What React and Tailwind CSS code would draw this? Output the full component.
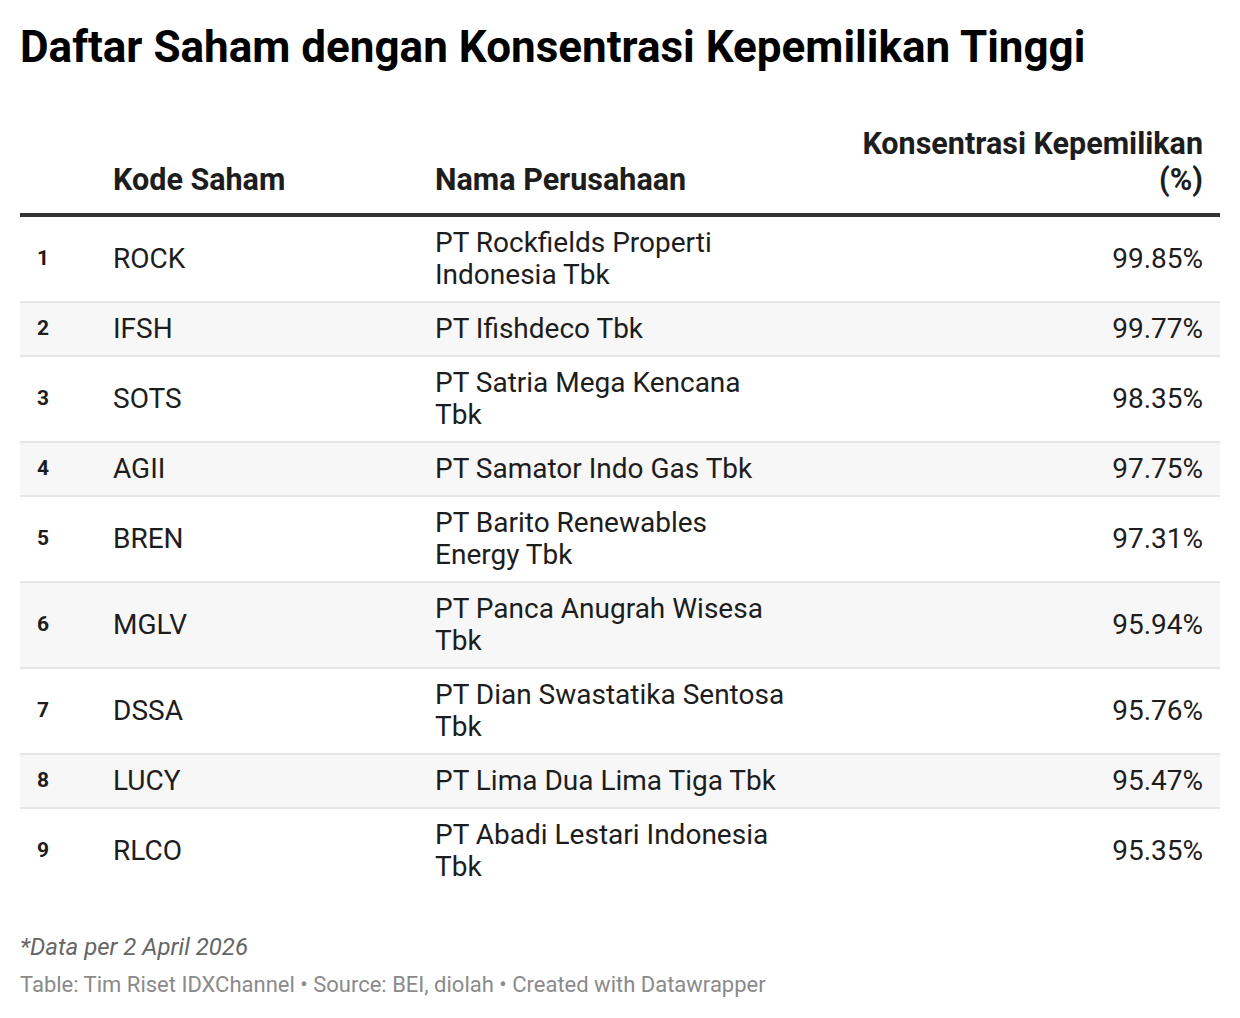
import React from "react";

const rows = [
  { no: 1, kode: "ROCK", nama: "PT Rockfields Properti Indonesia Tbk", nilai: "99.85%" },
  { no: 2, kode: "IFSH", nama: "PT Ifishdeco Tbk", nilai: "99.77%" },
  { no: 3, kode: "SOTS", nama: "PT Satria Mega Kencana Tbk", nilai: "98.35%" },
  { no: 4, kode: "AGII", nama: "PT Samator Indo Gas Tbk", nilai: "97.75%" },
  { no: 5, kode: "BREN", nama: "PT Barito Renewables Energy Tbk", nilai: "97.31%" },
  { no: 6, kode: "MGLV", nama: "PT Panca Anugrah Wisesa Tbk", nilai: "95.94%" },
  { no: 7, kode: "DSSA", nama: "PT Dian Swastatika Sentosa Tbk", nilai: "95.76%" },
  { no: 8, kode: "LUCY", nama: "PT Lima Dua Lima Tiga Tbk", nilai: "95.47%" },
  { no: 9, kode: "RLCO", nama: "PT Abadi Lestari Indonesia Tbk", nilai: "95.35%" },
];

export default function App() {
  return (
    <div
      className="bg-white px-5 pt-[20px] text-[#1d1d1d]"
      style={{ fontFamily: "Roboto, 'Liberation Sans', sans-serif" }}
    >
      <h1 className="text-[44px] leading-[54px] font-bold text-black">
        Daftar Saham dengan Konsentrasi Kepemilikan Tinggi
      </h1>

      <table className="mt-[52px] w-full border-collapse">
        <thead>
          <tr className="border-b-4 border-[#333333]">
            <th className="w-[93px]"></th>
            <th className="w-[322px] text-left align-bottom pb-[15px] text-[30.5px] leading-[36px] font-bold">
              Kode Saham
            </th>
            <th className="w-[360px] text-left align-bottom pb-[15px] text-[30.5px] leading-[36px] font-bold">
              Nama Perusahaan
            </th>
            <th className="text-right align-bottom pb-[15px] pr-[17px] text-[30.5px] leading-[36px] font-bold">
              <div className="ml-auto w-[360px]">Konsentrasi Kepemilikan (%)</div>
            </th>
          </tr>
        </thead>
        <tbody>
          {rows.map((r, i) => (
            <tr
              key={r.no}
              className={`${i % 2 === 1 ? "bg-[#f7f7f7]" : "bg-white"} ${
                i < rows.length - 1 ? "border-b-2 border-[#e6e6e6]" : ""
              }`}
            >
              <td className="pl-[17px] py-[10px] text-[21px] font-bold align-middle">{r.no}</td>
              <td className="py-[10px] text-[28px] leading-[32px] align-middle">{r.kode}</td>
              <td className="py-[10px] pr-[10px] text-[28px] leading-[32px] align-middle">
                <div className="w-[355px]">{r.nama}</div>
              </td>
              <td className="py-[10px] pr-[17px] text-right text-[28px] leading-[32px] align-middle">
                {r.nilai}
              </td>
            </tr>
          ))}
        </tbody>
      </table>

      <div className="mt-[38px] text-[24px] leading-[32px] italic text-[#666666]">*Data per 2 April 2026</div>
      <div className="mt-[7px] text-[22px] leading-[30px] text-[#8a8a8a]">
        Table: Tim Riset IDXChannel • Source: BEI, diolah • Created with Datawrapper
      </div>
    </div>
  );
}
